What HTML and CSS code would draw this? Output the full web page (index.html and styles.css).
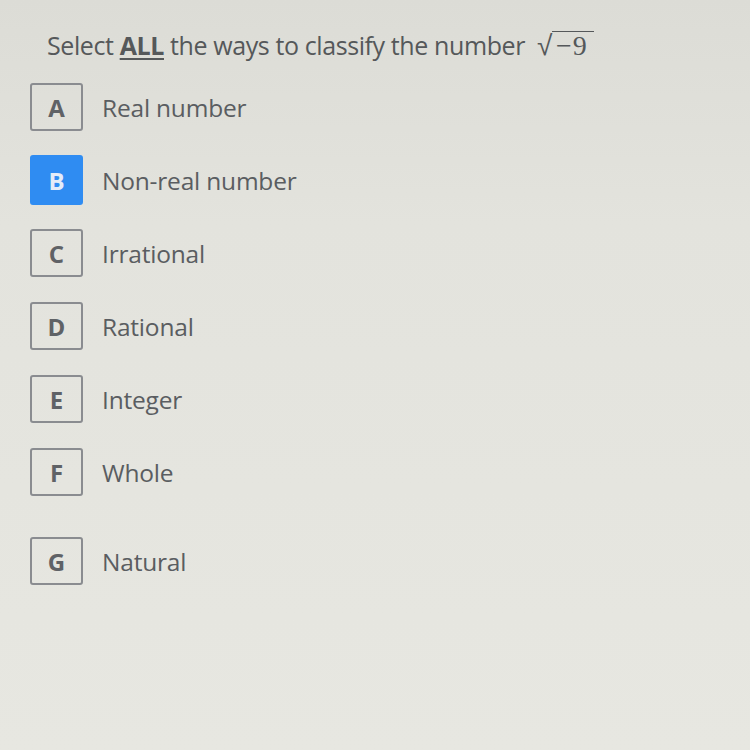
FILE: index.html
```html
<!DOCTYPE html>
<html>
<head>
<meta charset="utf-8">
<link rel="stylesheet" href="styles.css">
</head>
<body>
<div class="page">
  <h1 class="question">Select <span class="all">ALL</span> the ways to classify the number <span class="sqrt"><span class="radical">√</span><span class="radicand">−9</span></span></h1>
  <ul class="options">
    <li class="option"><span class="key">A</span><span class="label">Real number</span></li>
    <li class="option"><span class="key selected">B</span><span class="label">Non-real number</span></li>
    <li class="option"><span class="key">C</span><span class="label">Irrational</span></li>
    <li class="option"><span class="key">D</span><span class="label">Rational</span></li>
    <li class="option"><span class="key">E</span><span class="label">Integer</span></li>
    <li class="option"><span class="key">F</span><span class="label">Whole</span></li>
    <li class="option last"><span class="key">G</span><span class="label">Natural</span></li>
  </ul>
</div>
</body>
</html>
```
FILE: styles.css
```css
html, body {
  margin: 0;
  padding: 0;
}
body {
  width: 750px;
  height: 750px;
  overflow: hidden;
  background: linear-gradient(180deg, #dcdcd6 0%, #e3e3dd 30%, #e7e7e1 100%);
  font-family: "Open Sans", "DejaVu Sans", sans-serif;
  color: #55585c;
}
.page {
  padding: 26px 0 0 30px;
}
.question {
  margin: 0 0 0 17px;
  font-size: 25px;
  font-weight: 400;
  letter-spacing: -0.4px;
  line-height: 38px;
  color: #55585a;
  display: flex;
  align-items: baseline;
  white-space: pre;
}
.all {
  font-weight: 700;
  text-decoration: underline;
  text-underline-offset: 3px;
  text-decoration-thickness: 2px;
}
.sqrt {
  display: inline-flex;
  align-items: flex-end;
  margin-left: 6px;
  font-family: "Liberation Serif", "DejaVu Serif", serif;
}
.radical {
  font-size: 28px;
  font-family: "DejaVu Sans", sans-serif;
  font-weight: 300;
  line-height: 1;
}
.radicand {
  border-top: 1.5px solid #55585a;
  font-size: 28px;
  line-height: 28px;
  padding: 0 6px 0 4px;
  letter-spacing: 1px;
}
.options {
  list-style: none;
  margin: 19px 0 0 0;
  padding: 0;
  display: flex;
  flex-direction: column;
  gap: 25px;
}
.option {
  display: flex;
  align-items: center;
  gap: 19px;
  height: 48px;
}
.option.last {
  margin-top: 16px;
}
.key {
  box-sizing: border-box;
  width: 53px;
  height: 48px;
  border: 2px solid #8a8c90;
  border-radius: 3px;
  display: flex;
  align-items: center;
  justify-content: center;
  font-size: 24px;
  font-weight: 700;
  color: #5f6266;
}
.key.selected {
  height: 50px;
  background: #2f8cf2;
  border-color: #2f8cf2;
  color: #e4ecf8;
}
.label {
  font-size: 24.5px;
  color: #5a5d61;
  letter-spacing: -0.2px;
}
```
